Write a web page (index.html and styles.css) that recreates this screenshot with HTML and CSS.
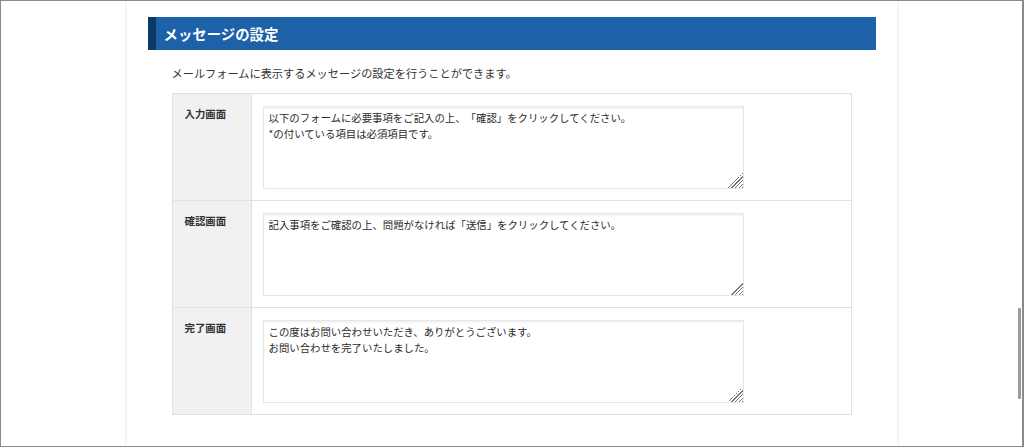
FILE: index.html
```html
<!DOCTYPE html>
<html lang="ja">
<head>
    <meta charset="UTF-8">
    <meta name="viewport" content="width=device-width, initial-scale=1.0">
    <title>メッセージの設定</title>
    <link rel="stylesheet" href="styles.css">
</head>
<body>

    <div class="frame">
        <!-- Page column -->
        <div class="page">
            <h2 class="section-title">メッセージの設定</h2>
            <p class="section-lead">メールフォームに表示するメッセージの設定を行うことができます。</p>

            <table class="setting-table">
                <tr>
                    <th>入力画面</th>
                    <td><textarea>以下のフォームに必要事項をご記入の上、「確認」をクリックしてください。
*の付いている項目は必須項目です。</textarea></td>
                </tr>
                <tr>
                    <th>確認画面</th>
                    <td><textarea>記入事項をご確認の上、問題がなければ「送信」をクリックしてください。</textarea></td>
                </tr>
                <tr>
                    <th>完了画面</th>
                    <td><textarea>この度はお問い合わせいただき、ありがとうございます。
お問い合わせを完了いたしました。</textarea></td>
                </tr>
            </table>
        </div>

        <!-- Scrollbar thumb -->
        <div class="scroll-thumb"></div>
    </div>

</body>
</html>
```

FILE: styles.css
```css
/* General Reset */
* {
    margin: 0;
    padding: 0;
    box-sizing: border-box;
}

body {
    font-family: "Noto Sans CJK JP", "Noto Sans", sans-serif;
    background-color: #fff;
    color: #333;
    text-spacing-trim: space-all;
}

/* Window frame */
.frame {
    position: relative;
    width: 1024px;
    height: 447px;
    border: 1px solid #8a8a8a;
    border-right-width: 2px;
    overflow: hidden;
    background-color: #fff;
}

/* Page column */
.page {
    width: 770px;
    height: 100%;
    margin: 0 auto;
    padding: 16px 21px 0;
    background-color: #fff;
    box-shadow: 0 0 4px rgba(0, 0, 0, 0.13);
}

/* Section title */
.section-title {
    height: 33px;
    line-height: 33px;
    padding-left: 8px;
    border-left: 8px solid #0d3966;
    background-color: #1d61a8;
    color: #fff;
    font-size: 14.4px;
    font-weight: bold;
}

.section-lead {
    margin: 14px 24px 0;
    font-size: 11.2px;
    line-height: 18px;
    color: #333;
}

/* Setting table */
.setting-table {
    width: 680px;
    margin: 11px 24px 0;
    border-collapse: collapse;
}

.setting-table th,
.setting-table td {
    border: 1px solid #e2e2e2;
    padding: 12px 11px 11px;
    vertical-align: top;
}

.setting-table th {
    width: 79px;
    background-color: #f1f1f1;
    font-size: 10.4px;
    font-weight: bold;
    line-height: 16px;
    text-align: left;
    padding-left: 12px;
    color: #333;
}

.setting-table textarea {
    display: block;
    width: 481px;
    height: 83px;
    padding: 3px 5px;
    border: 1px solid #e6e6e6;
    box-shadow: inset 0 2px 2px rgba(0, 0, 0, 0.05);
    font-family: "Noto Sans CJK JP", "Noto Sans", sans-serif;
    font-size: 10.4px;
    line-height: 16px;
    color: #2a2a2a;
    background-color: #fff;
    outline: none;
    text-spacing-trim: space-all;
}

/* Hatched resize grip */
.setting-table textarea::-webkit-resizer {
    background:
        linear-gradient(to top left, transparent 50%, #fff 50%),
        repeating-linear-gradient(-45deg, #777 0 1px, #fff 1px 2.5px);
}

/* Scrollbar */
.scroll-thumb {
    position: absolute;
    right: 1px;
    top: 307px;
    width: 3px;
    height: 91px;
    background-color: #9a9a9a;
    border-radius: 1px;
}
```
